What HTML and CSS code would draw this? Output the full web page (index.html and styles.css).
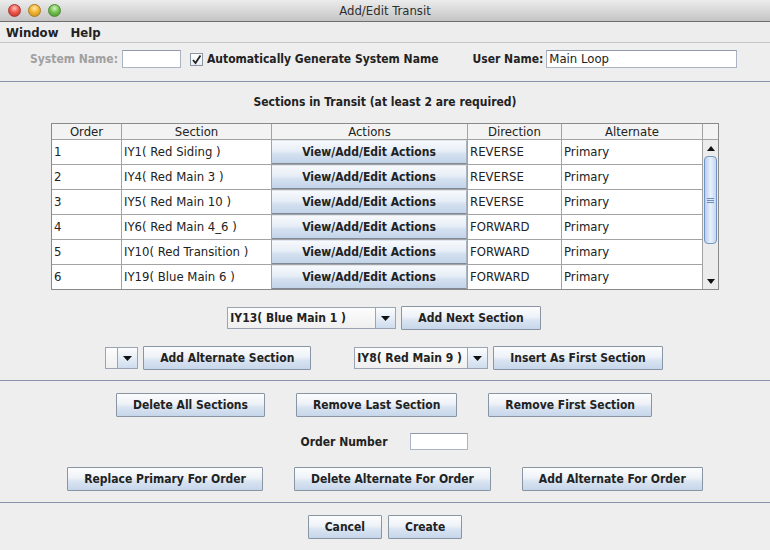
FILE: index.html
```html
<!DOCTYPE html>
<html>
<head>
<meta charset="utf-8">
<title>Add/Edit Transit</title>
<link rel="stylesheet" href="styles.css">
</head>
<body>
<div class="titlebar">
  <div class="lights">
    <span class="light red"></span><span class="light yellow"></span><span class="light green"></span>
  </div>
  <div class="title">Add/Edit Transit</div>
  <div></div>
</div>
<div class="menubar"><span>Window</span><span>Help</span></div>

<div class="namerow">
  <span class="disabled">System Name:</span>
  <span class="field sysname"></span>
  <span class="checkbox"><svg width="11" height="11" viewBox="0 0 11 11"><path d="M2 6 L4.5 9 L9.5 1.5" fill="none" stroke="#222" stroke-width="1.8"/></svg></span>
  <span class="autolbl">Automatically Generate System Name</span>
  <span class="userlbl">User Name:</span>
  <span class="field uname">Main Loop</span>
</div>

<div class="sep sep1"></div>
<div class="heading">Sections in Transit (at least 2 are required)</div>

<div class="grid">
  <div class="hd">Order</div>
  <div class="hd">Section</div>
  <div class="hd">Actions</div>
  <div class="hd">Direction</div>
  <div class="hd">Alternate</div>
  <div class="hd"></div>

  <div class="scroll">
    <div class="sarrow"><svg width="8" height="5" viewBox="0 0 8 5"><path d="M0 5 L4 0 L8 5Z" fill="#111"/></svg></div>
    <div class="track">
      <div class="thumb"><span class="grip"></span></div>
    </div>
    <div class="sarrow"><svg width="8" height="5" viewBox="0 0 8 5"><path d="M0 0 L4 5 L8 0Z" fill="#111"/></svg></div>
  </div>

  <div class="cell">1</div><div class="cell">IY1( Red Siding )</div><div class="act"><div class="actbtn">View/Add/Edit Actions</div></div><div class="cell">REVERSE</div><div class="cell">Primary</div>
  <div class="cell">2</div><div class="cell">IY4( Red Main 3 )</div><div class="act"><div class="actbtn">View/Add/Edit Actions</div></div><div class="cell">REVERSE</div><div class="cell">Primary</div>
  <div class="cell">3</div><div class="cell">IY5( Red Main 10 )</div><div class="act"><div class="actbtn">View/Add/Edit Actions</div></div><div class="cell">REVERSE</div><div class="cell">Primary</div>
  <div class="cell">4</div><div class="cell">IY6( Red Main 4_6 )</div><div class="act"><div class="actbtn">View/Add/Edit Actions</div></div><div class="cell">FORWARD</div><div class="cell">Primary</div>
  <div class="cell">5</div><div class="cell">IY10( Red Transition )</div><div class="act"><div class="actbtn">View/Add/Edit Actions</div></div><div class="cell">FORWARD</div><div class="cell">Primary</div>
  <div class="cell">6</div><div class="cell">IY19( Blue Main 6 )</div><div class="act"><div class="actbtn">View/Add/Edit Actions</div></div><div class="cell">FORWARD</div><div class="cell">Primary</div>
</div>

<div class="row row-next">
  <div class="combo c-next"><span class="val">IY13( Blue Main 1 )</span><span class="arrow"><svg width="9" height="5" viewBox="0 0 9 5"><path d="M0 0 L4.5 5 L9 0Z" fill="#111"/></svg></span></div>
  <button class="btn">Add Next Section</button>
</div>

<div class="row row-alt">
  <div class="group">
    <div class="combo c-empty"><span class="val"></span><span class="arrow"><svg width="9" height="5" viewBox="0 0 9 5"><path d="M0 0 L4.5 5 L9 0Z" fill="#111"/></svg></span></div>
    <button class="btn">Add Alternate Section</button>
  </div>
  <div class="group">
    <div class="combo c-first"><span class="val">IY8( Red Main 9 )</span><span class="arrow"><svg width="9" height="5" viewBox="0 0 9 5"><path d="M0 0 L4.5 5 L9 0Z" fill="#111"/></svg></span></div>
    <button class="btn">Insert As First Section</button>
  </div>
</div>

<div class="sep sep2"></div>

<div class="row row-del">
  <button class="btn">Delete All Sections</button>
  <button class="btn">Remove Last Section</button>
  <button class="btn">Remove First Section</button>
</div>

<div class="row row-order">
  <span class="orderlbl">Order Number</span>
  <span class="field ordfield"></span>
</div>

<div class="row row-rep">
  <button class="btn">Replace Primary For Order</button>
  <button class="btn">Delete Alternate For Order</button>
  <button class="btn">Add Alternate For Order</button>
</div>

<div class="sep sep3"></div>

<div class="row row-final">
  <button class="btn">Cancel</button>
  <button class="btn">Create</button>
</div>
</body>
</html>
```

FILE: styles.css
```css
* { box-sizing: border-box; }
html, body { margin: 0; padding: 0; }
body {
  width: 770px;
  height: 550px;
  overflow: hidden;
  background: #eeeeee;
  font-family: "DejaVu Sans Condensed", "DejaVu Sans", sans-serif;
  font-size: 12px;
  color: #222;
}

/* title bar */
.titlebar {
  height: 22px;
  display: grid;
  grid-template-columns: 1fr auto 1fr;
  align-items: center;
  background: linear-gradient(#ececec, #d6d6d6 55%, #c4c4c4);
  border-bottom: 1px solid #6e6e6e;
}
.lights { display: flex; gap: 7px; padding-left: 8px; }
.light { width: 13px; height: 13px; border-radius: 50%; }
.red { background: radial-gradient(circle at 50% 30%, #ffc2bb 0, #ec5a50 45%, #c4281f 100%); border: 1px solid #a8382f; }
.yellow { background: radial-gradient(circle at 50% 30%, #ffe9a8 0, #f0b534 45%, #c98a12 100%); border: 1px solid #a9791c; }
.green { background: radial-gradient(circle at 50% 30%, #d5f5bf 0, #74c252 45%, #3f8e25 100%); border: 1px solid #4b8a33; }
.title { font-size: 13px; color: #2e2e2e; }

/* menu */
.menubar {
  height: 21px;
  display: flex;
  align-items: center;
  gap: 12px;
  padding-left: 6px;
  font-weight: bold;
  font-size: 13px;
  background: #ededed;
  border-bottom: 1px solid #c6c6c6;
}

/* name row */
.namerow {
  margin-top: 7px;
  height: 18px;
  display: flex;
  align-items: center;
  padding-left: 30px;
  font-weight: bold;
}
.disabled { color: #a0a0a0; }
.field {
  display: block;
  height: 18px;
  background: #fff;
  border: 1px solid #aab4c2;
  border-top-color: #8f99a8;
  font-weight: normal;
  font-size: 13px;
  line-height: 16px;
  padding-left: 2px;
}
.sysname { width: 59px; margin-left: 4px; }
.checkbox {
  width: 13px; height: 13px;
  margin-left: 9px;
  background: linear-gradient(#ffffff, #e8eef5);
  border: 1px solid #8c96a4;
  display: flex; align-items: center; justify-content: center;
}
.autolbl { margin-left: 4px; }
.userlbl { margin-left: 34px; }
.uname { width: 191px; margin-left: 3px; }

/* separators */
.sep { height: 1px; background: #8793a9; }
.sep1 { margin-top: 13px; }
.sep2 { margin-top: 10px; }
.sep3 { margin-top: 11px; }

.heading {
  margin-top: 12px;
  text-align: center;
  font-weight: bold;
  line-height: 16px;
}

/* table */
.grid {
  margin: 13px 0 0 51px;
  width: 668px;
  display: grid;
  grid-template-columns: 69px 149px 195px 93px 140px 15px;
  grid-template-rows: 15px repeat(6, 24px);
  gap: 1px;
  background: #a3a3a3;
  border: 1px solid #8a8a8a;
  font-size: 13px;
}
.hd {
  background: #f3f3f3;
  text-align: center;
  line-height: 15px;
  color: #222;
}
.cell {
  background: #fff;
  line-height: 24px;
  padding-left: 2px;
  white-space: nowrap;
  overflow: hidden;
}
.act { background: #fff; }
.actbtn {
  height: 100%;
  border-bottom: 1px solid #7f8995;
  border-right: 1px solid #a9b3bf;
  border-top: 1px solid #dfe6ef;
  background: linear-gradient(#f7f9fc, #e7eef7 45%, #d3e0ef 60%, #c3d4e9);
  text-align: center;
  font-weight: bold;
  font-size: 12px;
  line-height: 22px;
}
.scroll {
  grid-column: 6;
  grid-row: 2 / span 6;
  background: #ececec;
  display: flex;
  flex-direction: column;
}
.sarrow { height: 16px; display: flex; align-items: center; justify-content: center; }
.track { flex: 1; padding: 0 1px; }
.thumb {
  height: 88px;
  border: 1px solid #7594c6;
  border-radius: 4px;
  background: linear-gradient(90deg, #b9cfee, #e8f0fb 50%, #c4d7f1);
  display: flex; align-items: center; justify-content: center;
}
.grip {
  width: 7px; height: 5px;
  border-top: 1px solid #6f8db8;
  border-bottom: 1px solid #6f8db8;
}
.grip::after {
  content: "";
  display: block;
  margin-top: 1px;
  height: 1px;
  background: #6f8db8;
}

/* rows of controls */
.row { display: flex; justify-content: center; align-items: center; }
.row-next { margin-top: 16px; gap: 5px; padding-right: 2px; }
.row-alt { margin-top: 16px; gap: 43px; padding-right: 2px; }
.group { display: flex; align-items: center; gap: 5px; }
.row-del { margin-top: 12px; gap: 31px; padding-right: 2px; }
.row-order { margin-top: 16px; gap: 22px; height: 17px; padding-right: 2px; }
.row-rep { margin-top: 17px; gap: 31px; }
.row-final { margin-top: 12px; gap: 6px; }

.btn {
  height: 24px;
  padding: 0 16px;
  border: 1px solid #8a95a4;
  border-radius: 1px;
  background: linear-gradient(#fbfcfd, #eef2f8 45%, #d9e4f1 60%, #c6d6ea);
  font-family: "DejaVu Sans Condensed", "DejaVu Sans", sans-serif;
  font-weight: bold;
  font-size: 12px;
  color: #222;
  margin: 0;
}

.combo {
  display: flex;
  height: 22px;
  border: 1px solid #9aa4b2;
}
.combo .val {
  background: linear-gradient(#fdfdfd, #efefef);
  font-weight: bold;
  line-height: 20px;
  padding-left: 2px;
  white-space: nowrap;
}
.combo .arrow {
  width: 20px;
  border-left: 1px solid #9aa4b2;
  background: linear-gradient(#fbfcfd, #e6edf6 50%, #cddcee);
  display: flex; align-items: center; justify-content: center;
}
.c-next .val { width: 147px; }
.c-empty .val { width: 11px; }
.c-first .val { width: 112px; }

.orderlbl { font-weight: bold; }
.ordfield { width: 58px; height: 17px; }
```
